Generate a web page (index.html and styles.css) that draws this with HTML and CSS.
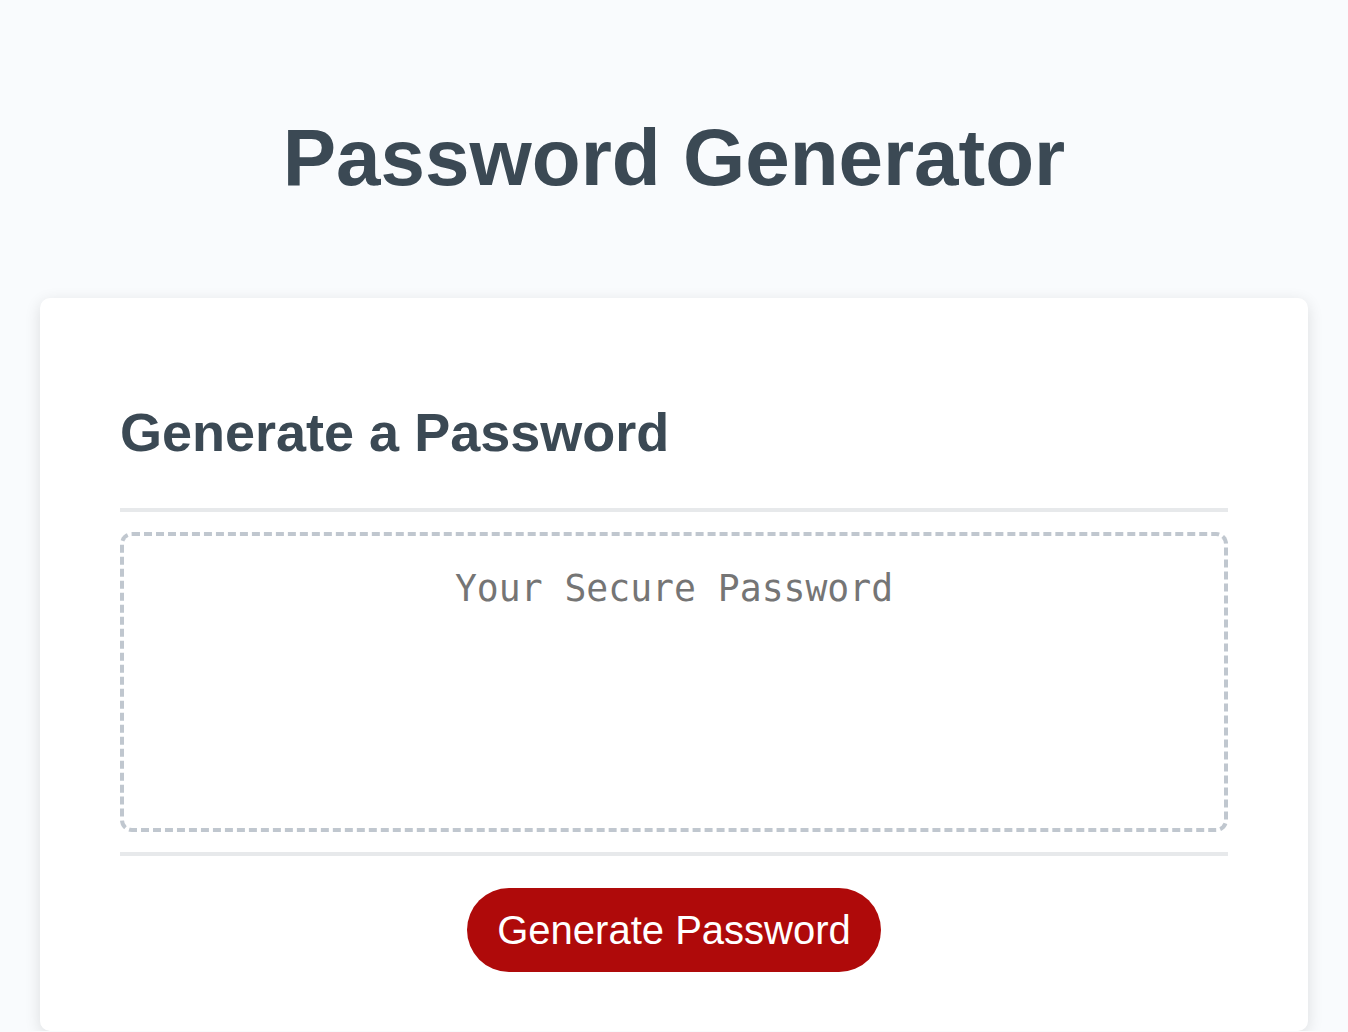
FILE: index.html
```html
<!DOCTYPE html>
<html lang="en">
<head>
<meta charset="UTF-8">
<title>Password Generator</title>
<link rel="stylesheet" href="styles.css">
</head>
<body>
<div class="wrapper">
  <header class="header">
    <h1 class="title">Password Generator</h1>
  </header>
  <div class="card">
    <div class="card-header">
      <h2 class="card-title">Generate a Password</h2>
    </div>
    <div class="card-body">
      <textarea readonly class="password" placeholder="Your Secure Password" aria-label="Generated Password"></textarea>
    </div>
    <div class="card-footer">
      <button class="btn">Generate Password</button>
    </div>
  </div>
</div>
</body>
</html>
```

FILE: styles.css
```css
html, body {
  margin: 0;
  padding: 0;
}

body {
  background-color: #f9fbfd;
  font-family: "Liberation Sans", Arial, sans-serif;
  color: #3b4954;
}

.wrapper {
  padding: 112px 40px 0;
}

.header {
  text-align: center;
}

.title {
  margin: 0;
  font-size: 80px;
  line-height: 92px;
  font-weight: 700;
  color: #3b4954;
}

.card {
  margin-top: 94px;
  background-color: #ffffff;
  border-radius: 10px;
  box-shadow: rgba(0, 0, 0, 0.12) 0 4px 16px 0;
  padding: 103px 80px 59px;
}

.card-title {
  margin: 0;
  font-size: 54px;
  line-height: 62px;
  font-weight: 700;
  color: #3b4954;
}

.card-header::after {
  content: "";
  display: block;
  height: 4px;
  margin-top: 45px;
  background: #e7e9eb;
}

.card-body {
  padding: 20px 0;
}

.password {
  display: block;
  box-sizing: border-box;
  width: 100%;
  height: 300px;
  margin: 0;
  padding: 32px 20px;
  border: 4px dashed #c0c7cf;
  border-radius: 12px;
  resize: none;
  overflow: hidden;
  background: #ffffff;
  font-family: "DejaVu Sans Mono", "Liberation Mono", monospace;
  font-size: 36.4px;
  line-height: 42px;
  text-align: center;
  color: #3b4954;
  outline: none;
}

.password::placeholder {
  color: #757575;
  opacity: 1;
}

.card-footer {
  text-align: center;
}

.card-footer::before {
  content: "";
  display: block;
  height: 4px;
  background: #e7e9eb;
  margin-bottom: 32px;
}

.btn {
  display: inline-block;
  height: 84px;
  padding: 0 30px;
  border: none;
  border-radius: 42px;
  background-color: #af0a0a;
  color: #ffffff;
  font-family: "Liberation Sans", Arial, sans-serif;
  font-size: 40px;
  line-height: 84px;
  cursor: pointer;
}
```
